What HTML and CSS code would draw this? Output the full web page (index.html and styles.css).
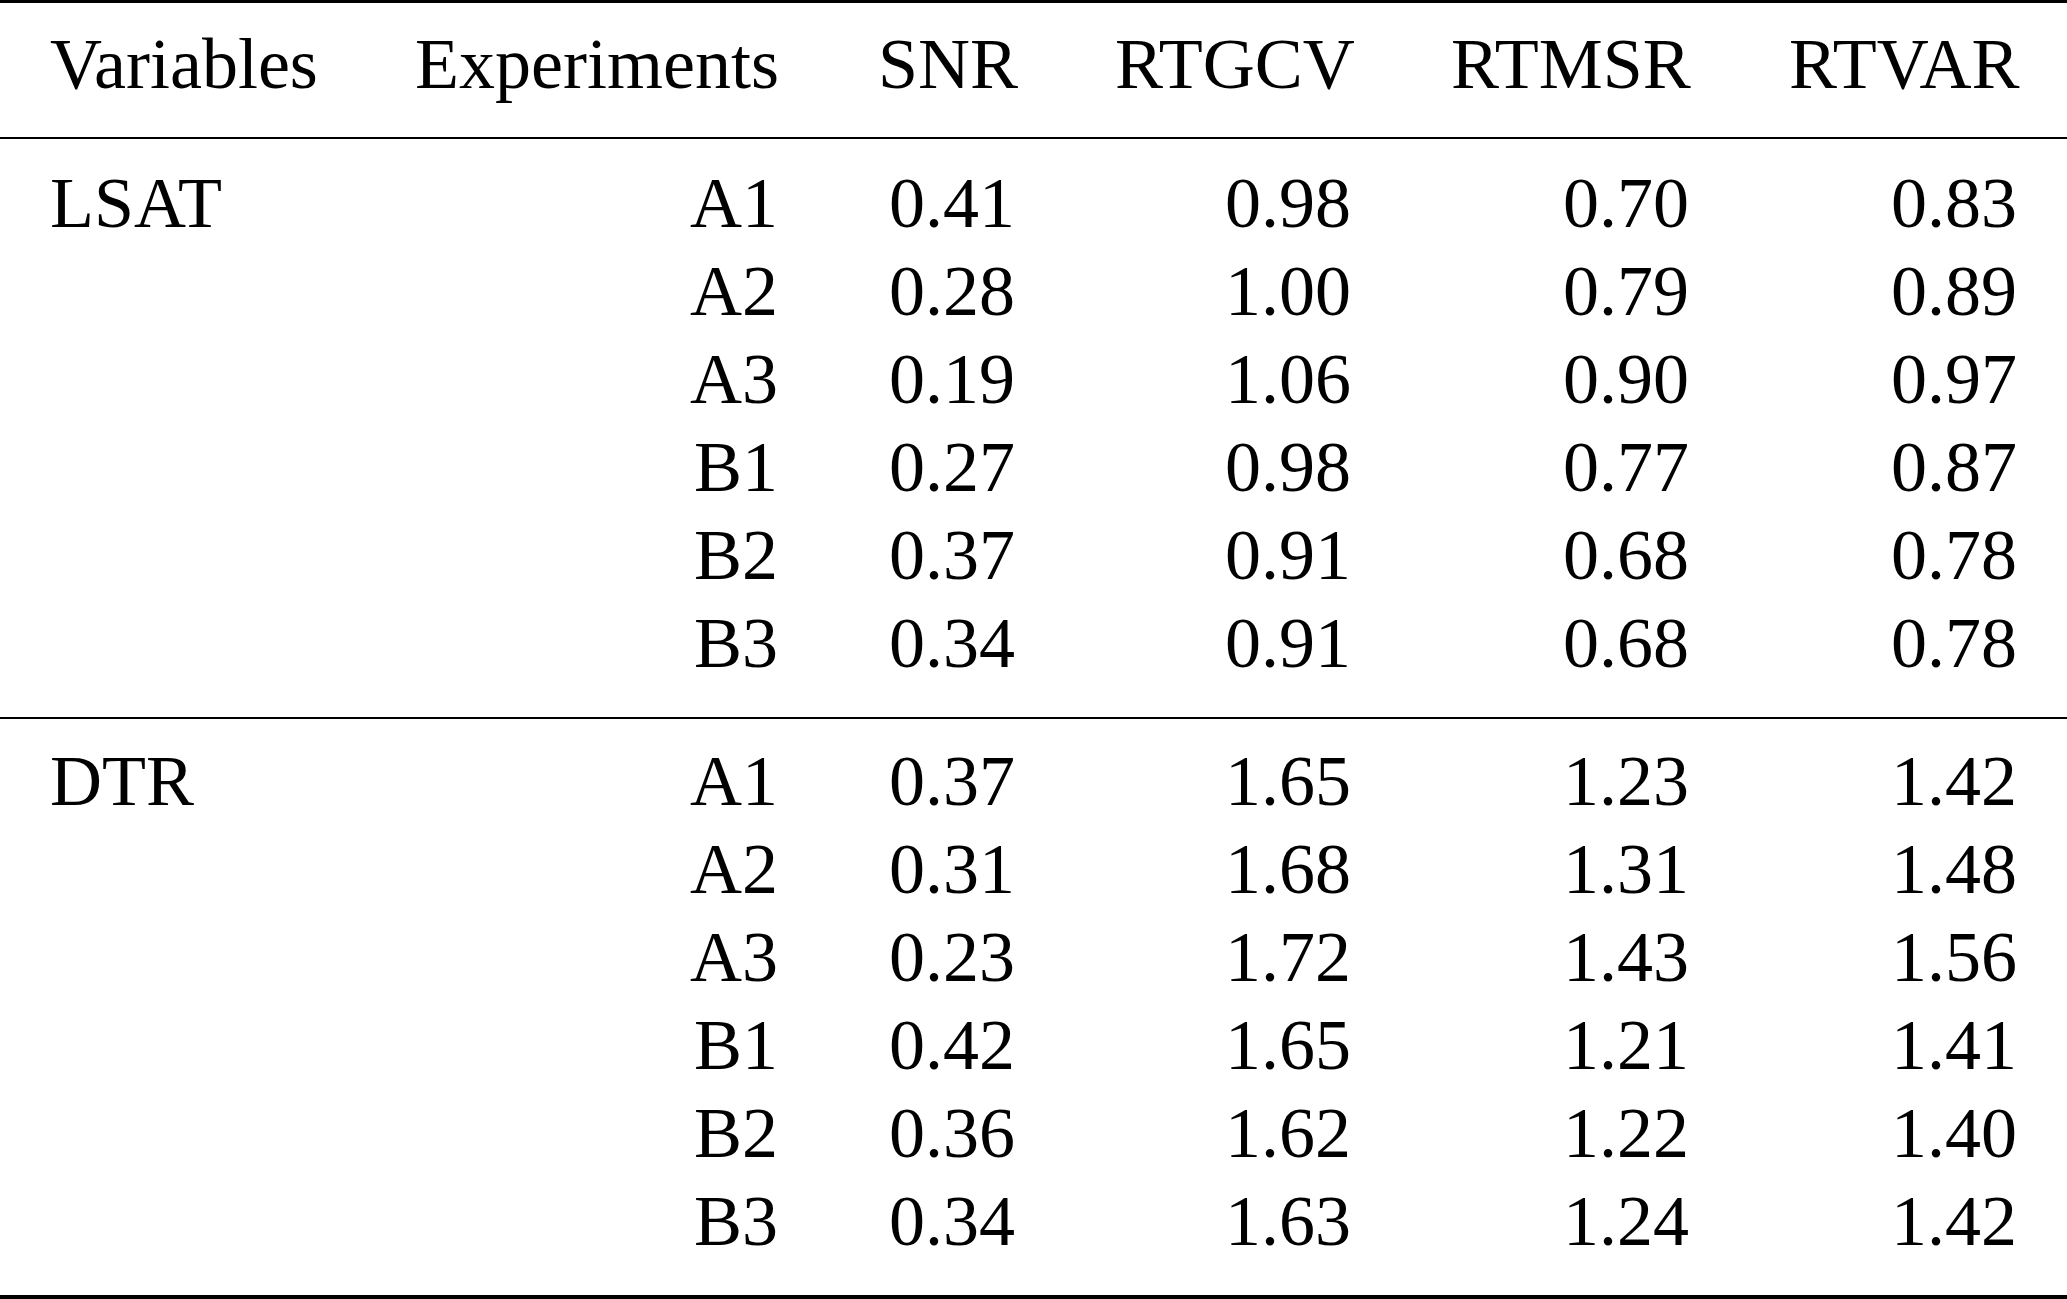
FILE: index.html
```html
<!DOCTYPE html>
<html lang="en">
<head>
<meta charset="utf-8">
<title>Table</title>
<link rel="stylesheet" href="styles.css">
</head>
<body>
<table class="results">
  <colgroup>
    <col class="c1"><col class="c2"><col class="c3"><col class="c4"><col class="c5"><col class="c6">
  </colgroup>
  <thead>
    <tr>
      <th class="left">Variables</th>
      <th>Experiments</th>
      <th>SNR</th>
      <th>RTGCV</th>
      <th>RTMSR</th>
      <th>RTVAR</th>
    </tr>
  </thead>
  <tbody class="group">
    <tr class="first"><td class="left">LSAT</td><td>A1</td><td>0.41</td><td>0.98</td><td>0.70</td><td>0.83</td></tr>
    <tr><td class="left"></td><td>A2</td><td>0.28</td><td>1.00</td><td>0.79</td><td>0.89</td></tr>
    <tr><td class="left"></td><td>A3</td><td>0.19</td><td>1.06</td><td>0.90</td><td>0.97</td></tr>
    <tr><td class="left"></td><td>B1</td><td>0.27</td><td>0.98</td><td>0.77</td><td>0.87</td></tr>
    <tr><td class="left"></td><td>B2</td><td>0.37</td><td>0.91</td><td>0.68</td><td>0.78</td></tr>
    <tr class="last"><td class="left"></td><td>B3</td><td>0.34</td><td>0.91</td><td>0.68</td><td>0.78</td></tr>
  </tbody>
  <tbody class="group second">
    <tr class="first"><td class="left">DTR</td><td>A1</td><td>0.37</td><td>1.65</td><td>1.23</td><td>1.42</td></tr>
    <tr><td class="left"></td><td>A2</td><td>0.31</td><td>1.68</td><td>1.31</td><td>1.48</td></tr>
    <tr><td class="left"></td><td>A3</td><td>0.23</td><td>1.72</td><td>1.43</td><td>1.56</td></tr>
    <tr><td class="left"></td><td>B1</td><td>0.42</td><td>1.65</td><td>1.21</td><td>1.41</td></tr>
    <tr><td class="left"></td><td>B2</td><td>0.36</td><td>1.62</td><td>1.22</td><td>1.40</td></tr>
    <tr class="last"><td class="left"></td><td>B3</td><td>0.34</td><td>1.63</td><td>1.24</td><td>1.42</td></tr>
  </tbody>
</table>
</body>
</html>
```
FILE: styles.css
```css
html, body {
  margin: 0;
  padding: 0;
  background: #ffffff;
}

body {
  font-family: "Liberation Serif", "Times New Roman", serif;
  color: #000000;
}

.results {
  width: 2067px;
  table-layout: fixed;
  border-collapse: separate;
  border-spacing: 0;
  font-size: 72px;
}

.c1 { width: 365px; }
.c2 { width: 463px; }
.c3 { width: 237px; }
.c4 { width: 336px; }
.c5 { width: 338px; }
.c6 { width: 328px; }

.results th,
.results td {
  padding: 0 50px;
  line-height: 88px;
  height: 88px;
  font-weight: normal;
  text-align: right;
  white-space: nowrap;
  vertical-align: baseline;
}

.results .left {
  text-align: left;
}

.results thead th {
  border-top: 3px solid #000;
  border-bottom: 2px solid #000;
  padding-top: 17px;
  padding-bottom: 29px;
}

.results .first td {
  padding-top: 20px;
}

.results .second .first td {
  padding-top: 18px;
}

.results .last td {
  padding-bottom: 30px;
  border-bottom: 2px solid #000;
}

.results .second .last td {
  border-bottom: 4px solid #000;
}
```
